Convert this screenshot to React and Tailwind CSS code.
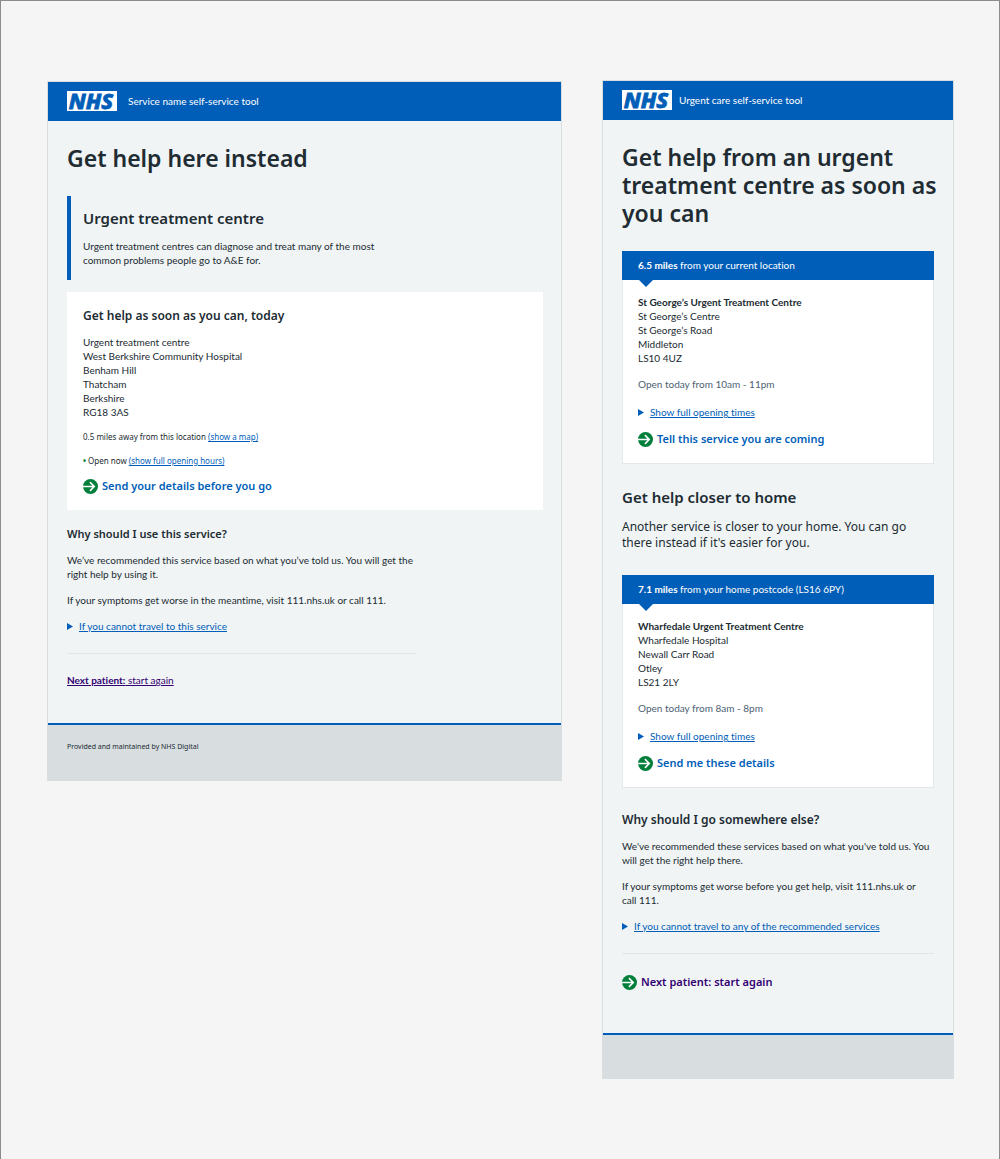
import React from "react";

function Logo() {
  return (
    <svg viewBox="0 0 50 20" className="h-5 w-[50px] shrink-0" role="img" aria-label="NHS">
      <rect width="50" height="20" fill="#fff" />
      <text
        x="24"
        y="18"
        textAnchor="middle"
        className="font-['Noto_Sans',sans-serif] text-[22px] font-extrabold italic"
        fill="#005eb8"
        stroke="#005eb8"
        strokeWidth="0.8"
      >
        NHS
      </text>
    </svg>
  );
}

function Header({ service, gap }) {
  return (
    <header className={`flex h-[39px] items-center bg-[#005eb8] px-[19px] pb-0.5 text-white ${gap}`}>
      <Logo />
      <span>{service}</span>
    </header>
  );
}

function Footer({ children, size }) {
  return (
    <footer
      className={`border-t-2 border-[#005eb8] bg-[#d8dde0] px-[19px] pt-4 font-['Noto_Sans',sans-serif] text-[7px] leading-3 ${size}`}
    >
      {children}
    </footer>
  );
}

function ActionLink({ children, color = "text-[#005eb8]" }) {
  return (
    <a
      href="#"
      className={`flex w-fit items-center gap-1 font-['Noto_Sans',sans-serif] text-[11px] leading-4 font-semibold ${color}`}
    >
      <svg viewBox="0 0 16 16" className="size-[15px] shrink-0" aria-hidden="true">
        <circle cx="8" cy="8" r="8" fill="#007f3b" />
        <path d="M0 8h12M7.4 3.4 12 8l-4.6 4.6" fill="none" stroke="#fff" strokeWidth="1.7" />
      </svg>
      {children}
    </a>
  );
}

function Expander({ label, children }) {
  return (
    <details>
      <summary className="flex w-fit cursor-pointer list-none items-center gap-1.5 text-[#005eb8]">
        <svg viewBox="0 0 6 7" className="h-[7px] w-1.5 shrink-0" aria-hidden="true">
          <path d="M0 0 6 3.5 0 7z" fill="currentColor" />
        </svg>
        <span className="underline">{label}</span>
      </summary>
      <div className="pt-2">{children}</div>
    </details>
  );
}

function ServiceCard({ distance, from, name, address, opening, action }) {
  return (
    <section className="border border-t-0 border-[#e3e8ea] bg-white">
      <div className="relative -mx-px bg-[#005eb8] px-4 py-[7px] leading-[15px] text-white">
        <b className="font-bold">{distance}</b> {from}
        <svg viewBox="0 0 14 7" className="absolute top-full left-[17px] h-[7px] w-3.5" aria-hidden="true">
          <path d="M0 0h14L7 7z" fill="#005eb8" />
        </svg>
      </div>
      <div className="px-[15px] pt-[15px] pb-4">
        <address className="not-italic">
          <h3 className="font-bold">{name}</h3>
          {address.map((line) => (
            <div key={line}>{line}</div>
          ))}
        </address>
        <p className="mt-3 text-[#4c6272]">{opening}</p>
        <div className="mt-3.5 mb-3">
          <Expander label="Show full opening times">{opening}</Expander>
        </div>
        <ActionLink>{action}</ActionLink>
      </div>
    </section>
  );
}

function LeftScreen() {
  return (
    <article className="mt-px border border-[#d8dde0] bg-[#f0f4f5]">
      <Header service="Service name self-service tool" gap="gap-[11px]" />
      <main className="px-[19px] pt-[23px] pb-9">
        <h1 className="font-['Noto_Sans',sans-serif] text-[23px] leading-7 font-semibold">Get help here instead</h1>
        <section className="mt-6 mb-3 border-l-4 border-[#005eb8] py-3 pl-3">
          <h2 className="mb-[11px] font-['Noto_Sans',sans-serif] text-[15px] leading-5 font-semibold">
            Urgent treatment centre
          </h2>
          <p className="mb-px max-w-[310px]">
            Urgent treatment centres can diagnose and treat many of the most common problems people go to A&amp;E for.
          </p>
        </section>
        <section className="-mr-px bg-white p-4">
          <h2 className="mb-[11px] font-['Noto_Sans',sans-serif] text-xs leading-4 font-semibold">
            Get help as soon as you can, today
          </h2>
          <address className="not-italic">
            {[
              "Urgent treatment centre",
              "West Berkshire Community Hospital",
              "Benham Hill",
              "Thatcham",
              "Berkshire",
              "RG18 3AS",
            ].map((line) => (
              <div key={line}>{line}</div>
            ))}
          </address>
          <p className="mt-3 font-['Noto_Sans',sans-serif] text-[8px] leading-3">
            0.5 miles away from this location{" "}
            <a href="#" className="text-[#005eb8] underline">(show a map)</a>
          </p>
          <p className="mt-3 mb-[11px] font-['Noto_Sans',sans-serif] text-[8px] leading-3">
            <b className="text-[#007f3b]">•</b> Open now{" "}
            <a href="#" className="text-[#005eb8] underline">(show full opening hours)</a>
          </p>
          <ActionLink>Send your details before you go</ActionLink>
        </section>
        <section className="mt-4 max-w-[350px]">
          <h2 className="mb-[11px] font-['Noto_Sans',sans-serif] text-[11px] leading-4 font-semibold">
            Why should I use this service?
          </h2>
          <p className="mb-3">
            We’ve recommended this service based on what you’ve told us. You will get the right help by using it.
          </p>
          <p className="mb-3">If your symptoms get worse in the meantime, visit 111.nhs.uk or call 111.</p>
          <Expander label="If you cannot travel to this service">Call 111 for other options.</Expander>
          <hr className="mt-5 mb-[19px] border-[#e1e6e8]" />
          <a href="#" className="text-[#330072] underline">
            <b className="font-bold">Next patient:</b> start again
          </a>
        </section>
      </main>
      <Footer size="h-[57px]">Provided and maintained by NHS Digital</Footer>
    </article>
  );
}

function RightScreen() {
  return (
    <article className="border border-[#d8dde0] bg-[#f0f4f5]">
      <Header service="Urgent care self-service tool" gap="gap-[7px]" />
      <main className="px-[19px] pt-[23px] pb-[43px]">
        <h1 className="-mr-3 mb-6 font-['Noto_Sans',sans-serif] text-[23px] leading-7 font-semibold">
          Get help from an urgent treatment centre as soon as you can
        </h1>
        <ServiceCard
          distance="6.5 miles"
          from="from your current location"
          name="St George’s Urgent Treatment Centre"
          address={["St George’s Centre", "St George’s Road", "Middleton", "LS10 4UZ"]}
          opening="Open today from 10am - 11pm"
          action="Tell this service you are coming"
        />
        <h2 className="mt-[23px] mb-3 font-['Noto_Sans',sans-serif] text-[15px] leading-5 font-semibold">
          Get help closer to home
        </h2>
        <p className="mb-6 font-['Noto_Sans',sans-serif] text-xs leading-4">
          Another service is closer to your home. You can go there instead if it's easier for you.
        </p>
        <ServiceCard
          distance="7.1 miles"
          from="from your home postcode (LS16 6PY)"
          name="Wharfedale Urgent Treatment Centre"
          address={["Wharfedale Hospital", "Newall Carr Road", "Otley", "LS21 2LY"]}
          opening="Open today from 8am - 8pm"
          action="Send me these details"
        />
        <h2 className="mt-6 mb-[11px] font-['Noto_Sans',sans-serif] text-xs leading-4 font-semibold">
          Why should I go somewhere else?
        </h2>
        <p className="mb-3">
          We've recommended these services based on what you've told us. You will get the right help there.
        </p>
        <p className="mb-3 max-w-[308px]">
          If your symptoms get worse before you get help, visit 111.nhs.uk or call 111.
        </p>
        <Expander label="If you cannot travel to any of the recommended services">Call 111 for other options.</Expander>
        <hr className="my-5 border-[#e1e6e8]" />
        <ActionLink color="text-[#330072]">Next patient: start again</ActionLink>
      </main>
      <Footer size="h-[45px]" />
    </article>
  );
}

export default function App() {
  return (
    <div className="grid min-h-screen grid-cols-[515fr_352fr] items-start gap-x-10 border border-[#8c8c8c] bg-[#f5f5f5] pt-[79px] pr-[45px] pb-20 pl-[46px] font-['Lato',sans-serif] text-[10px] leading-3.5 text-[#212b32] [font-variant-ligatures:none]">
      <LeftScreen />
      <RightScreen />
    </div>
  );
}
